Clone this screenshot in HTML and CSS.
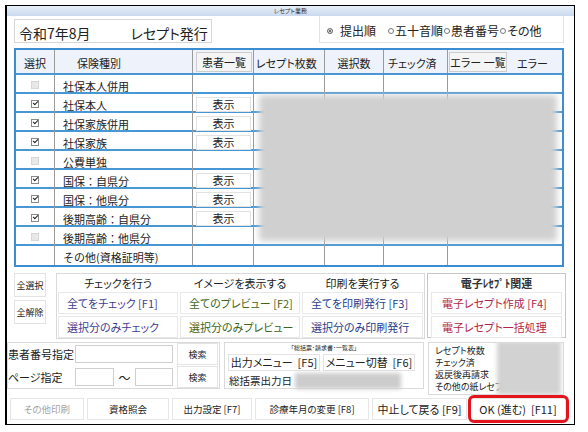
FILE: index.html
```html
<!DOCTYPE html>
<html lang="ja">
<head>
    <meta charset="UTF-8">
    <title>レセプト業務</title>
    <link rel="stylesheet" href="styles.css">
</head>
<body>
    <div class="window">
        <div class="titlebar">レセプト業務</div>

        <div class="top-row">
            <div class="title-box"><span>令和7年8月</span><span class="sub">レセプト発行</span></div>
            <div class="sort-box">
                <span class="radio on"></span><span class="opt first">提出順</span>
                <span class="radio"></span><span class="opt">五十音順</span>
                <span class="radio"></span><span class="opt">患者番号</span>
                <span class="radio"></span><span class="opt">その他</span>
            </div>
        </div>

        <div class="table-wrap">
            <div class="grid">
                <div class="row head">
                    <div class="center">選択</div>
                    <div class="kind">保険種別</div>
                    <div><button class="hbtn">患者一覧</button></div>
                    <div class="pad">レセプト枚数</div>
                    <div class="center">選択数</div>
                    <div class="pad">チェック済</div>
                    <div><button class="hbtn err">エラー 一覧</button></div>
                    <div class="pad-err">エラー</div>
                </div>
                <div class="row">
                    <div class="box-cell"><span class="cb off"></span></div>
                    <div class="name">社保本人併用</div>
                    <div></div><div></div><div></div><div></div><div></div><div></div>
                </div>
                <div class="row">
                    <div class="box-cell"><span class="cb on"></span></div>
                    <div class="name">社保本人</div>
                    <div><button class="show">表示</button></div>
                    <div></div><div></div><div></div><div></div><div></div>
                </div>
                <div class="row">
                    <div class="box-cell"><span class="cb on"></span></div>
                    <div class="name">社保家族併用</div>
                    <div><button class="show">表示</button></div>
                    <div></div><div></div><div></div><div></div><div></div>
                </div>
                <div class="row">
                    <div class="box-cell"><span class="cb on"></span></div>
                    <div class="name">社保家族</div>
                    <div><button class="show">表示</button></div>
                    <div></div><div></div><div></div><div></div><div></div>
                </div>
                <div class="row">
                    <div class="box-cell"><span class="cb off"></span></div>
                    <div class="name">公費単独</div>
                    <div></div><div></div><div></div><div></div><div></div><div></div>
                </div>
                <div class="row">
                    <div class="box-cell"><span class="cb on"></span></div>
                    <div class="name">国保：自県分</div>
                    <div><button class="show">表示</button></div>
                    <div></div><div></div><div></div><div></div><div></div>
                </div>
                <div class="row">
                    <div class="box-cell"><span class="cb on"></span></div>
                    <div class="name">国保：他県分</div>
                    <div><button class="show">表示</button></div>
                    <div></div><div></div><div></div><div></div><div></div>
                </div>
                <div class="row">
                    <div class="box-cell"><span class="cb on"></span></div>
                    <div class="name">後期高齢：自県分</div>
                    <div><button class="show">表示</button></div>
                    <div></div><div></div><div></div><div></div><div></div>
                </div>
                <div class="row">
                    <div class="box-cell"><span class="cb off"></span></div>
                    <div class="name">後期高齢：他県分</div>
                    <div></div><div></div><div></div><div></div><div></div><div></div>
                </div>
                <div class="row last">
                    <div class="box-cell"></div>
                    <div class="name">その他(資格証明等)</div>
                    <div></div><div></div><div></div><div></div><div></div><div></div>
                </div>
            </div>
            <div class="mask"></div>
        </div>

        <div class="action-row">
            <div class="select-btns">
                <button class="btn small">全選択</button>
                <button class="btn small">全解除</button>
            </div>
            <div class="group group-main">
                <div class="glabel">チェックを行う</div>
                <div class="glabel">イメージを表示する</div>
                <div class="glabel">印刷を実行する</div>
                <button class="btn act c-check">全てをチェック [F1]</button>
                <button class="btn act c-preview">全てのプレビュー [F2]</button>
                <button class="btn act c-print">全てを印刷発行 [F3]</button>
                <button class="btn act c-check">選択分のみチェック</button>
                <button class="btn act c-preview">選択分のみプレビュー</button>
                <button class="btn act c-print">選択分のみ印刷発行</button>
            </div>
            <div class="group group-elec">
                <div class="glabel strong">電子ﾚｾﾌﾟﾄ関連</div>
                <button class="btn act c-elec">電子レセプト作成 [F4]</button>
                <button class="btn act c-elec">電子レセプト一括処理</button>
            </div>
        </div>

        <div class="filter-row">
            <div class="box patient-box">
                <div class="frow">
                    <span class="flabel">患者番号指定</span>
                    <span class="field w-long"></span>
                    <button class="btn search">検索</button>
                </div>
                <div class="frow">
                    <span class="flabel">ページ指定</span>
                    <span class="field w-short"></span>
                    <span class="tilde">～</span>
                    <span class="field w-short2"></span>
                    <button class="btn search">検索</button>
                </div>
            </div>
            <div class="box summary-box">
                <div class="tiny">「総括票･請求書･一覧表」</div>
                <div class="srow">
                    <button class="btn menu">出力メニュー &nbsp;[F5]</button>
                    <button class="btn menu">メニュー切替 &nbsp;[F6]</button>
                </div>
                <div class="srow">
                    <span class="slabel">総括票出力日</span>
                    <span class="blurfield"></span>
                </div>
            </div>
            <div class="box count-box">
                <div>レセプト枚数</div>
                <div>チェック済</div>
                <div>返戻後再請求</div>
                <div>その他の紙レセプト</div>
                <div class="count-mask"></div>
            </div>
        </div>

        <div class="footer-row">
            <button class="btn foot w1 muted">その他印刷</button>
            <button class="btn foot w2">資格照会</button>
            <button class="btn foot w3">出力設定 [F7]</button>
            <button class="btn foot w4">診療年月の変更 [F8]</button>
            <button class="btn foot w5 big">中止して戻る [F9]</button>
            <div class="ok-wrap">
                <button class="btn foot w6 big">OK (進む) &nbsp;[F11]</button>
                <span class="highlight"></span>
            </div>
        </div>
    </div>
</body>
</html>
```

FILE: styles.css
```css
* {
    box-sizing: border-box;
}
body {
    margin: 0;
    width: 588px;
    height: 432px;
    background: #fff;
    font-family: "Noto Sans CJK JP", "Noto Sans", sans-serif;
    font-feature-settings: "palt";
    font-size: 11px;
    color: #222;
}
button {
    font: inherit;
    color: inherit;
    padding: 0;
    margin: 0;
    white-space: nowrap;
}
.window {
    margin: 5px 0 0 5px;
    width: 570px;
    height: 420px;
    border: 1px solid #000;
    border-left-width: 2px;
    background: #fff;
    display: flex;
    flex-direction: column;
}
.titlebar {
    height: 10px;
    background: linear-gradient(#e8eff9, #c9d9ee);
    font-size: 6px;
    line-height: 10px;
    text-align: center;
    color: #333;
}

/* top */
.top-row {
    display: flex;
    height: 32px;
}
.title-box {
    margin: 3px 0 0 7px;
    width: 198px;
    height: 24px;
    border: 1px solid #d6d6d6;
    font-size: 14px;
    line-height: 18px;
    padding: 4px 0 0 4px;
    display: flex;
}
.title-box .sub {
    margin-left: 40px;
}
.sort-box {
    margin: 0 10px 0 auto;
    width: 245px;
    height: 27px;
    border: 1px solid #e2e2e2;
    border-top: none;
    display: flex;
    align-items: flex-end;
    padding: 0 0 3px 6px;
    font-size: 12px;
    line-height: 16px;
}
.radio {
    width: 6px;
    height: 6px;
    border: 1px solid #777;
    border-radius: 50%;
    margin: 0 1px 5px 1px;
    flex: none;
}
.radio.on {
    background: #444;
    box-shadow: inset 0 0 0 1px #fff;
    margin-right: 7px;
}
.opt.first {
    margin-right: 11px;
}

/* table */
.table-wrap {
    position: relative;
    margin: 0 10px 0 7px;
    height: 219px;
}
.grid {
    border: 2px solid #3b8dd0;
    height: 219px;
}
.row {
    display: grid;
    grid-template-columns: 39px 138px 61px 71px 59px 64px 62px 52px;
    height: 19px;
    border-bottom: 2px solid #4797d5;
}
.row.last {
    border-bottom: none;
}
.row > div {
    border-right: 1px solid #9a9a9a;
}
.row > div:nth-child(n+7) {
    border-right: none;
}
.row.head {
    height: 25px;
    background: #eef3fb;
    line-height: 18px;
}
.head .center,
.head .pad,
.head .kind,
.head .pad-err {
    padding-top: 4px;
}
.center {
    text-align: center;
}
.kind {
    padding-left: 22px;
}
.pad {
    padding-left: 2px;
}
.head .pad:nth-child(6) {
    padding-left: 4px;
}
.pad-err {
    padding-left: 7px;
}
.hbtn {
    display: block;
    margin: 2px 1px 0 3px;
    width: 56px;
    height: 20px;
    border: 1px solid #cdcdcd;
    background: #f4f4f4;
    line-height: 18px;
}
.hbtn.err {
    margin-left: 1px;
    width: 58px;
}
.box-cell {
    display: flex;
    justify-content: center;
    align-items: center;
}
.cb {
    width: 8px;
    height: 8px;
    border: 1px solid #8a8a8a;
    background: #fff;
    position: relative;
}
.cb.off {
    background: #e8e8e8;
    border-color: #d6d6d6;
}
.cb.on::after {
    content: "";
    position: absolute;
    left: 1px;
    top: 0;
    width: 4px;
    height: 2px;
    border-left: 1.5px solid #222;
    border-bottom: 1.5px solid #222;
    transform: rotate(-45deg);
}
.name {
    padding: 4px 0 0 8px;
    line-height: 15px;
    white-space: nowrap;
    font-feature-settings: normal;
}
.show {
    display: block;
    margin: 3px 2px 0 3px;
    width: 55px;
    height: 15px;
    border: 1px solid #e2e2e2;
    background: #fff;
    line-height: 13px;
}
.mask {
    position: absolute;
    left: 245px;
    top: 47px;
    width: 298px;
    height: 146px;
    background: #d0d0d0;
    filter: blur(3px);
}

/* buttons */
.btn {
    background: #fff;
    border: 1px solid #e3e3e3;
}
.action-row {
    display: flex;
    margin-top: 6px;
    height: 66px;
    padding-left: 7px;
}
.select-btns {
    width: 32px;
    display: flex;
    flex-direction: column;
    gap: 3px;
}
.btn.small {
    height: 24px;
    font-size: 9px;
}
.group {
    height: 66px;
    border: 1px solid #dadada;
    display: grid;
    grid-template-rows: 16px 22px 22px;
    row-gap: 2px;
    padding: 0 1px;
}
.group-main {
    margin-left: 10px;
    width: 369px;
    grid-template-columns: 120px 120px 121px;
    column-gap: 2px;
}
.group-elec {
    margin-left: 2px;
    width: 139px;
    height: 65px;
    border-color: #c6c6c6;
    padding: 0 3px;
}
.glabel {
    text-align: center;
    line-height: 18px;
}
.glabel.strong {
    font-weight: bold;
    color: #333;
}
.btn.act {
    text-align: left;
    padding-left: 8px;
    border-color: #e8e8e8;
}
.group-elec .btn.act {
    padding-left: 10px;
}
.c-check {
    color: #3f3d92;
}
.c-preview {
    color: #3d6520;
}
.c-print {
    color: #2a3d8c;
}
.c-elec {
    color: #b02849;
}

/* filters */
.filter-row {
    display: flex;
    align-items: flex-start;
    margin-top: 3px;
    height: 54px;
}
.box {
    border: 1px solid #dadada;
}
.patient-box {
    width: 213px;
    height: 47px;
    display: flex;
    flex-direction: column;
    gap: 1px;
}
.frow {
    display: flex;
    align-items: center;
    height: 22px;
}
.flabel {
    width: 67px;
    white-space: nowrap;
}
.field {
    height: 18px;
    border: 1px solid #cfcfcf;
    background: #fff;
}
.w-long {
    width: 98px;
}
.w-short {
    width: 39px;
}
.w-short2 {
    width: 38px;
}
.tilde {
    width: 21px;
    text-align: center;
    font-size: 12px;
}
.btn.search {
    margin-left: 4px;
    width: 41px;
    height: 22px;
    font-size: 9px;
}
.summary-box {
    margin-left: 4px;
    width: 200px;
    height: 47px;
    padding: 0 3px;
}
.tiny {
    height: 10px;
    font-size: 6px;
    line-height: 10px;
    text-align: center;
}
.srow {
    display: flex;
    gap: 3px;
    align-items: center;
}
.btn.menu {
    margin-top: 1px;
    width: 92px;
    height: 17px;
    line-height: 15px;
}
.slabel {
    margin: 2px 0 0 1px;
    font-size: 10.5px;
    line-height: 16px;
    white-space: nowrap;
    flex: none;
}
.blurfield {
    margin-top: 2px;
    width: 106px;
    height: 16px;
    background: #cccccc;
    filter: blur(2px);
    flex: none;
}
.count-box {
    position: relative;
    overflow: hidden;
    margin-left: 4px;
    width: 136px;
    height: 53px;
    padding: 2px 0 0 6px;
    font-size: 9px;
    line-height: 12px;
    white-space: nowrap;
}
.count-mask {
    position: absolute;
    left: 68px;
    top: -2px;
    width: 64px;
    height: 54px;
    background: #d2d2d2;
    filter: blur(2px);
}

/* footer */
.footer-row {
    display: flex;
    gap: 3px;
    margin-top: 2px;
    height: 22px;
    padding-left: 3px;
}
.btn.foot {
    height: 22px;
    font-size: 9.5px;
    border-color: #e6e6e6;
}
.btn.foot.big {
    font-size: 11px;
}
.muted {
    color: #a4a4a4;
}
.w1 { width: 74px; }
.w2 { width: 82px; }
.w3 { width: 80px; }
.w4 { width: 114px; }
.w5 { width: 95px; }
.w6 { width: 96px; }
.ok-wrap {
    position: relative;
}
.highlight {
    position: absolute;
    left: -2px;
    top: -3px;
    right: -3px;
    bottom: -3px;
    border: 3px solid #e3141c;
    border-radius: 6px;
}
```
